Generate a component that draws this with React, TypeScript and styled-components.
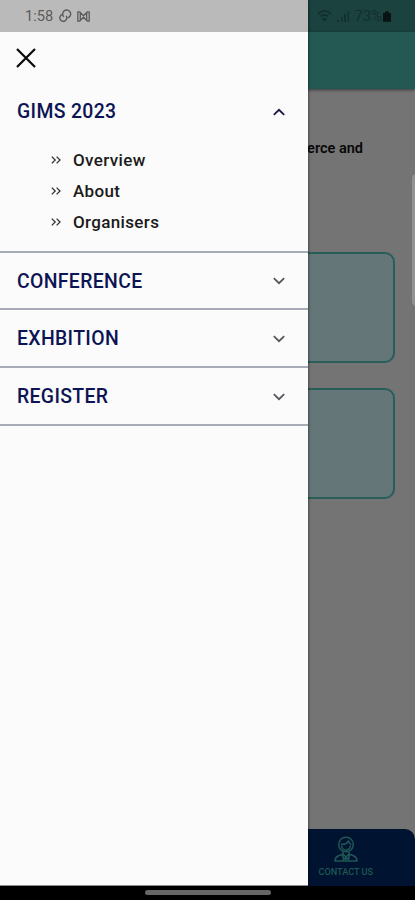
import React from "react";
import styled, { createGlobalStyle } from "styled-components";

const Global = createGlobalStyle`
  * { box-sizing: border-box; }
  body { margin: 0; font-family: Roboto, "Liberation Sans", sans-serif; background: #000; }
`;

const Phone = styled.div`
  position: relative;
  width: 415px;
  height: 900px;
  overflow: hidden;
  background: #000;
`;

const Page = styled.div`
  display: flex;
  flex-direction: column;
  height: 886px;
  background: #747474;
`;

const PageStatus = styled.div`
  display: flex;
  align-items: center;
  justify-content: flex-end;
  gap: 5px;
  height: 32px;
  flex: none;
  padding-right: 24px;
  background: #1b423e;
  color: #12302e;
  font-size: 14.8px;
`;

const Battery = styled.span`
  display: flex;
  align-items: center;
  gap: 1px;
`;

const PageHeader = styled.div`
  height: 57px;
  flex: none;
  background: #245852;
  box-shadow: 0 1px 3px rgba(0, 0, 0, 0.5);
`;

const PageBody = styled.div`
  display: flex;
  flex: 1;
  flex-direction: column;
  gap: 25px;
  padding: 51px 20px 0;
`;

const Intro = styled.p`
  height: 87px;
  margin: 0;
  padding-right: 32px;
  color: #080808;
  font-size: 14.5px;
  font-weight: 600;
  line-height: 18px;
  text-align: right;
  white-space: nowrap;
`;

const Card = styled.div`
  height: 111px;
  flex: none;
  border: 2px solid #285e57;
  border-radius: 10px;
  background: #647677;
`;

const EdgeHandle = styled.div`
  position: absolute;
  top: 174px;
  right: -6px;
  width: 9px;
  height: 132px;
  border-radius: 5px;
  background: #929292;
`;

const BottomNav = styled.div`
  display: flex;
  justify-content: flex-end;
  height: 57px;
  flex: none;
  padding: 7px 42px 0 0;
  border-radius: 10px 10px 0 0;
  background: #001330;
  color: #1f5755;
`;

const NavItem = styled.div`
  display: flex;
  flex-direction: column;
  align-items: center;
  gap: 4px;
  font-size: 9.1px;
  font-weight: 500;
  line-height: 12px;
`;

const Drawer = styled.aside`
  position: absolute;
  top: 0;
  left: 0;
  width: 307.5px;
  height: 886px;
  border-bottom: 1px solid #8d8d8d;
  background: #fbfbfb;
  box-shadow: 0 0 3px rgba(0, 0, 0, 0.65);
`;

const DrawerStatus = styled.div`
  display: flex;
  align-items: center;
  gap: 5px;
  height: 32px;
  padding-left: 25px;
  background: #bababa;
  color: #5a5a5a;
  font-size: 14.6px;
`;

const CloseButton = styled.button`
  display: flex;
  height: 51px;
  padding: 16px;
  border: 0;
  background: none;
  color: #080808;
`;

const Section = styled.section<{ $open?: boolean }>`
  height: ${(p) => (p.$open ? "169.7px" : "57.7px")};
  border-bottom: 2px solid #a6abb5;
`;

const SectionHead = styled.div`
  display: flex;
  align-items: center;
  justify-content: space-between;
  height: 57px;
  padding: 0 23px 0 17px;
`;

const Title = styled.h2`
  margin: 0;
  color: #0c1453;
  font-size: 19.4px;
  font-weight: 500;
  letter-spacing: 0.35px;
`;

const Links = styled.ul`
  display: flex;
  flex-direction: column;
  margin: 4px 0 0;
  padding: 0 0 0 51px;
  list-style: none;
`;

const LinkRow = styled.li`
  display: flex;
  align-items: center;
  gap: 12px;
  height: 31.2px;
  color: #1a1a1a;
  font-size: 17px;
  font-weight: 500;
  letter-spacing: 0.35px;
`;

const HomeBar = styled.div`
  width: 126px;
  height: 5px;
  margin: 4px 0 0 145px;
  border-radius: 3px;
  background: #666;
`;

const Chevron = ({ up }: { up?: boolean }) => (
  <svg width="12" height="8" viewBox="0 0 12 8" fill="none" stroke={up ? "#181744" : "#55565b"} strokeWidth="1.8">
    <path d={up ? "M.8 6.800 6 1.800 11.200 6.800" : "M.8 1.200 6 6.200 11.200 1.200"} />
  </svg>
);

const DoubleChevron = () => (
  <svg width="10" height="8" viewBox="0 0 10 8" fill="none" stroke="#333" strokeWidth="1.3">
    <path d="M.8.6 4.200 4 .8 7.400M5.600.6 9 4 5.600 7.400" />
  </svg>
);

const Agent = () => (
  <svg width="24" height="26" viewBox="0 0 24 26" fill="none" stroke="currentColor" strokeWidth="1.5" strokeLinejoin="round">
    <circle cx="12" cy="8.500" r="7.300" />
    <path d="M7 8c3 .8 6-.5 7.500-3 .5 2 1.500 3 3 3.300M7.500 9.500c.5 3 2 4.700 4.500 4.700s4-1.700 4.500-4.700M16 12.500l-3 1" />
    <path d="M9 15.500v2.500l-5 2c-2 1-3 2.500-3 5h22c0-2.500-1-4-3-5l-5-2v-2.500M9 18l3 3 3-3M8.500 18.500l1 5 2.500-2.500 2.500 2.500 1-5M12 21v4" />
  </svg>
);

export default function App() {
  return (
    <>
      <Global />
      <Phone>
        <Page>
          <PageStatus>
            <svg width="15" height="12" viewBox="0 0 15 12" fill="none" stroke="currentColor" strokeWidth="1.8">
              <path d="M1 4c4-4 9-4 13 0M3.500 6.500c2.600-2.300 5.400-2.300 8 0M6 9c1-.8 2-.8 3 0l-1.500 1.500Z" />
            </svg>
            <svg width="13" height="12" viewBox="0 0 13 12" fill="currentColor">
              <path d="M0 10h2v2H0zM4 7.500h1.500V12H4zM7 4h2v8H7zM10.500 1H12v11h-1.500z" />
            </svg>
            <Battery>
              73%
              <svg width="8" height="11" viewBox="0 0 9 12" fill="#071413">
                <path d="M2.500 0h4v2H9v10H0V2h2.500z" />
              </svg>
            </Battery>
          </PageStatus>
          <PageHeader />
          <PageBody>
            <Intro>erce and</Intro>
            <Card />
            <Card />
          </PageBody>
          <BottomNav>
            <NavItem>
              <Agent />
              CONTACT US
            </NavItem>
          </BottomNav>
        </Page>
        <EdgeHandle />
        <HomeBar />
        <Drawer>
          <DrawerStatus>
            1:58
            <svg width="14" height="14" viewBox="0 0 14 14" fill="none" stroke="currentColor" strokeWidth="1.4">
              <path d="M5.800 7.800A4 4 0 1 1 9.500 8.900" />
              <path d="M8.200 6.800A3.500 3.500 0 1 1 4.200 5.500" />
            </svg>
            <svg width="13" height="11" viewBox="0 0 13 11" fill="none" stroke="currentColor" strokeWidth="1.3" strokeLinejoin="round">
              <path d="M.8.8v9.400h1.700l4-4 4 4h1.700V.8h-1.700l-4 4-4-4ZM3.300 2v7M9.700 2v7" />
            </svg>
          </DrawerStatus>
          <CloseButton aria-label="Close">
            <svg width="20" height="20" viewBox="0 0 20 20" fill="none" stroke="currentColor" strokeWidth="2.2">
              <path d="m1 1 18 18M19 1 1 19" />
            </svg>
          </CloseButton>
          <Section $open>
            <SectionHead>
              <Title>GIMS 2023</Title>
              <Chevron up />
            </SectionHead>
            <Links>
              {["Overview", "About", "Organisers"].map((label) => (
                <LinkRow key={label}>
                  <DoubleChevron />
                  {label}
                </LinkRow>
              ))}
            </Links>
          </Section>
          {["CONFERENCE", "EXHBITION", "REGISTER"].map((label) => (
            <Section key={label}>
              <SectionHead>
                <Title>{label}</Title>
                <Chevron />
              </SectionHead>
            </Section>
          ))}
        </Drawer>
      </Phone>
    </>
  );
}
